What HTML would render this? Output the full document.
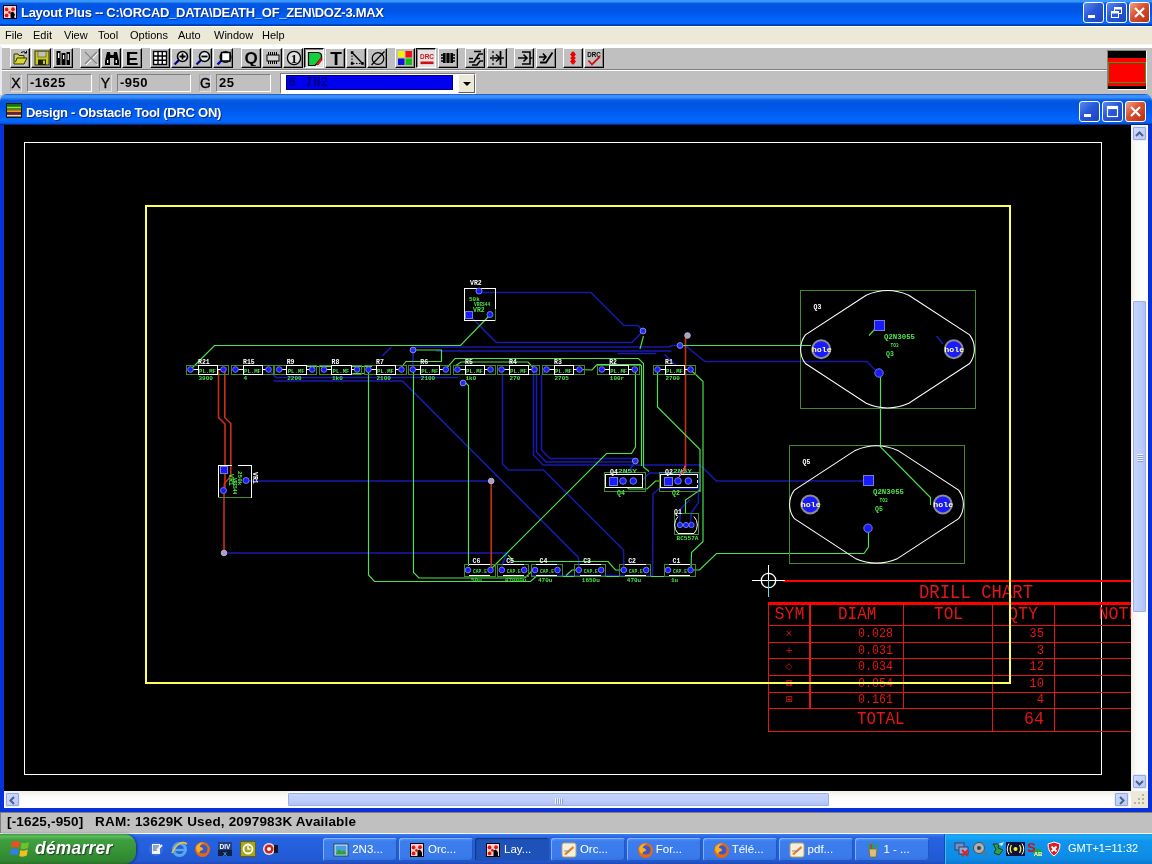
<!DOCTYPE html>
<html>
<head>
<meta charset="utf-8">
<title>Layout Plus</title>
<style>
html,body{margin:0;padding:0;}
body{will-change:transform;width:1152px;height:864px;overflow:hidden;position:relative;background:#c0c0c0;font-family:"Liberation Sans","DejaVu Sans",sans-serif;}
.abs{position:absolute;}
#title{left:0;top:0;width:1152px;height:26px;background:linear-gradient(#3a96ff 0%,#3a96ff 6%,#0a5ce0 13%,#0055e5 22%,#0055e5 45%,#0060f8 65%,#0668ff 90%,#0240b0 95%,#0240b0 100%);}
#title .t{position:absolute;left:21px;top:5px;font:bold 13px "Liberation Sans",sans-serif;color:#fff;white-space:nowrap;text-shadow:1px 1px 0 #0a2a80;letter-spacing:-0.28px;}
#menu{left:0;top:26px;width:1152px;height:19px;background:linear-gradient(#fff 0,#fff 1px,#ece9d8 1px,#ece9d8 17.5px,#fff 19px);}
#menu span{position:absolute;top:3px;font:11px "Liberation Sans",sans-serif;color:#000;}
#tb{left:0;top:45px;width:1152px;height:50px;background:#c0c0c0;border-top:3px solid #fff;box-sizing:border-box;border-left:2px solid #e8e8f0;}
#tbsep{left:2px;top:69px;width:1105px;height:1px;background:#808080;border-bottom:1px solid #fff;}
.b{position:absolute;top:48px;width:20px;height:20px;margin-left:-.5px;box-sizing:border-box;background:#c0c0c0;border:1px solid;border-color:#fff #000 #000 #fff;box-shadow:inset -1px -1px 0 #808080;}
.b svg{position:absolute;left:1.5px;top:1px;}
.b.p{background:#e4e4e4;border-color:#000 #fff #fff #000;box-shadow:inset 1px 1px 0 #808080;}
.b.p svg{left:2px;top:2px;}
.fl{position:absolute;top:74px;height:18px;box-sizing:border-box;border:1px solid;border-color:#808080 #fff #fff #808080;font:13px "Liberation Sans",sans-serif;color:#000;background:#c0c0c0;white-space:nowrap;overflow:hidden;}
.fl.l{font-size:14px;line-height:16px;text-align:center;-webkit-text-stroke:.35px #000;}
.fl.v{font-weight:bold;line-height:16px;padding-left:2px;letter-spacing:.5px;}
#combo{left:280px;top:72.5px;width:196px;height:21px;box-sizing:border-box;background:#fff;border:1px solid;border-color:#808080 #fff #fff #808080;}
#combo .sel{position:absolute;left:5px;top:1.5px;width:167px;height:15px;box-sizing:border-box;border:1px solid #000070;background:#0000f0;color:#000078;font:bold 12.3px "Liberation Mono",monospace;line-height:14px;white-space:pre;word-spacing:2.5px;padding-left:1.5px;overflow:hidden;}
#combo .dd{position:absolute;right:0px;top:0px;width:17px;height:19px;background:#ece9d8;border:1px solid;border-color:#fff #606060 #606060 #fff;box-sizing:border-box;}
#combo .dd:after{content:"";position:absolute;left:3.5px;top:7px;border:4px solid transparent;border-top:4px solid #000;}
#lay{left:1107px;top:50px;width:40px;height:40px;box-sizing:border-box;border:1px solid;border-color:#808080 #fff #fff #808080;background:#000;}
#lay i{position:absolute;left:0;top:7px;width:38px;height:28px;background:#f00;}
#lay b{position:absolute;left:0;top:11px;width:36px;height:19px;border:1px solid #30a020;background:#f00;}
.wb{position:absolute;width:21px;height:21px;box-sizing:border-box;border:1px solid #fff;border-radius:3px;background:linear-gradient(135deg,#5a8af0 0%,#2858d8 45%,#1c44c0 100%);}
.wb.x{background:linear-gradient(135deg,#f0a080 0%,#d85030 45%,#b83010 100%);}
.wb svg{position:absolute;left:0;top:0;}
#vs{left:1131px;top:125px;width:17px;height:666px;background:linear-gradient(90deg,#f0efe8,#fdfdfb 40%,#fff);}
#hs{left:4px;top:791px;width:1127px;height:17px;background:linear-gradient(#f0efe8,#fdfdfb 40%,#fff);}
#corner{left:1131px;top:791px;width:17px;height:17px;background:#ece9d8;}
.sb{position:absolute;width:15px;height:15px;box-sizing:border-box;background:linear-gradient(135deg,#d0dcfc,#b8c8f8);border:1px solid #e8eeff;border-radius:2px;box-shadow:0 0 0 1px #98a8e0 inset;}
.th{position:absolute;box-sizing:border-box;background:linear-gradient(90deg,#c8d6fb,#bccbf9 60%,#aebff5);border:1px solid #fff;border-radius:2px;box-shadow:0 0 0 1px #98b0ee inset;}
.thh{background:linear-gradient(#c8d6fb,#bccbf9 60%,#aebff5);}
#ctitle{left:0;top:94px;width:1152px;height:31px;background:linear-gradient(#1a4fa8 0%,#3a90ff 5%,#3a90ff 11%,#0a5ce0 20%,#0055e0 30%,#0058e8 50%,#0062f8 70%,#0668ff 88%,#0550d0 96%,#001060 100%);border-radius:7px 7px 0 0;}
#ctitle .t{position:absolute;left:26px;top:11px;font:bold 13px "Liberation Sans",sans-serif;color:#fff;white-space:nowrap;text-shadow:1px 1px 0 #0a2a80;letter-spacing:-0.27px;}
#cframe{left:0;top:125px;width:1152px;height:687px;background:#0831d9;}
#canvas{will-change:transform;left:4px;top:125px;width:1127px;height:666px;background:#000;overflow:hidden;}
#status{left:0;top:812px;width:1152px;height:22px;background:#c0c0c0;box-shadow:inset 0 -1px 0 #f4f4f4,inset 1px 1px 0 #808080;}
#status .t{position:absolute;left:7px;top:2px;font:bold 13.5px "Liberation Sans",sans-serif;color:#000;white-space:nowrap;letter-spacing:.17px;}
#task{left:0;top:834px;width:1152px;height:30px;background:linear-gradient(#3a80f0 0%,#2663e0 12%,#245edc 50%,#2258d2 90%,#1d4ab8 100%);}

#start{position:absolute;left:0;top:0;width:136px;height:30px;background:linear-gradient(#3c9a3c 0%,#5cbc5c 8%,#3f9f3f 20%,#379337 55%,#2f862f 90%,#2a6e2a 100%);border-radius:0 12px 12px 0;box-shadow:1px 0 3px rgba(0,0,40,.5);}
#start span{position:absolute;left:35px;top:4px;font:italic bold 17.5px "Liberation Sans",sans-serif;color:#fff;text-shadow:1px 1px 1px #204020;letter-spacing:.2px;}
.tk{position:absolute;top:4px;height:23px;width:74px;box-sizing:border-box;border-radius:3px;background:linear-gradient(#5a94f4 0%,#3c7eee 15%,#3a7aea 80%,#3270de 100%);box-shadow:inset 1px 1px 0 #7fb0ff,inset -1px -1px 0 #2456c0;color:#fff;font:11.5px "Liberation Sans",sans-serif;line-height:23px;white-space:nowrap;overflow:hidden;}
.tk.a{background:#1e52b8;box-shadow:inset 1px 1px 1px #12357c;}
.tk span{position:absolute;left:29px;top:0;}
.tk svg{position:absolute;left:10px;top:3.5px;}
#tray{position:absolute;left:944px;top:0;width:207px;height:30px;background:linear-gradient(#1a9ef0 0%,#18a8f8 10%,#1094ec 25%,#0e8ce6 80%,#0a78d0 100%);border-left:1px solid #0a50b0;box-shadow:inset 1px 0 0 #40b8ff;}
#tray span{position:absolute;left:123px;top:8px;font:11px "Liberation Sans",sans-serif;color:#fff;white-space:nowrap;}
.ql{position:absolute;top:7px;}
</style>
</head>
<body>
<div id="title" class="abs"><span class="t">Layout Plus -- C:\ORCAD_DATA\DEATH_OF_ZEN\DOZ-3.MAX</span></div>
<svg class="abs" style="left:3px;top:5px" width="14" height="14" viewBox="0 0 14 14"><rect width="14" height="14" fill="#000"/><rect x="1" y="1" width="12" height="12" fill="#f2d4d0"/><circle cx="3.6" cy="4.4" r="1.9" fill="#f01010"/><circle cx="10" cy="4.2" r="1.9" fill="#f01010"/><circle cx="3.6" cy="10.4" r="1.9" fill="#f01010"/><circle cx="6.4" cy="7.4" r="1.3" fill="#f01010"/><circle cx="6.3" cy="3.6" r="1" fill="#b0e0a0"/><path d="M7.5,7.5 L10,6.5 L12,9.5 L12,13 L7.5,13 Z" fill="#000"/><rect x="11.3" y="10.6" width="1" height="2" fill="#fff"/><rect x="5.5" y="11.6" width="2" height="1" fill="#fff"/></svg>
<div class="wb" style="left:1083px;top:2px"><svg width="19" height="19"><rect x="4" y="12" width="7" height="3" fill="#fff"/></svg></div>
<div class="wb" style="left:1106px;top:2px"><svg width="19" height="19"><rect x="7.5" y="4.5" width="7" height="6" fill="none" stroke="#fff" stroke-width="1"/><rect x="7.5" y="4.5" width="7" height="2" fill="#fff"/><rect x="4.5" y="8.5" width="7" height="6" fill="#2858d8" stroke="#fff" stroke-width="1"/><rect x="4.5" y="8.5" width="7" height="2" fill="#fff"/></svg></div>
<div class="wb x" style="left:1129px;top:2px"><svg width="19" height="19"><path d="M5,5 L14,14 M14,5 L5,14" stroke="#fff" stroke-width="2.2"/></svg></div>
<div id="menu" class="abs">
<span style="left:5px">File</span><span style="left:33px">Edit</span><span style="left:64px">View</span><span style="left:98px">Tool</span><span style="left:130px">Options</span><span style="left:178px">Auto</span><span style="left:214px">Window</span><span style="left:262px">Help</span>
</div>
<div id="tb" class="abs"></div>
<div id="tbsep" class="abs"></div>
<div class="b" style="left:10.5px"><svg width="16" height="16" viewBox="0 0 16 16"><path d="M1,6 L1,14 L11,14 L14,8 L4,8 L2.5,12 M1,6 L1,4 L5,4 L6,5.5 L11,5.5 L11,8" fill="#d8d830" stroke="#303000" stroke-width="1"/><path d="M8,2.5 Q11,0.5 13.5,3 M13.5,3 L13.5,0.8 M13.5,3 L11.3,3" fill="none" stroke="#000" stroke-width="1"/></svg></div>
<div class="b" style="left:31.8px"><svg width="16" height="16" viewBox="0 0 16 16"><rect x="1" y="1" width="14" height="14" fill="#c8c820" stroke="#303000"/><rect x="4" y="1.5" width="8" height="5.5" fill="#c0c0c0" stroke="#505000" stroke-width=".6"/><rect x="4" y="9.5" width="8" height="5.5" fill="#202000"/><rect x="9" y="10.5" width="2" height="3.5" fill="#c8c820"/></svg></div>
<div class="b" style="left:53.0px"><svg width="16" height="16" viewBox="0 0 16 16"><rect x="1.5" y="1" width="4" height="14" fill="#000"/><rect x="6.5" y="3" width="4" height="12" fill="#000"/><rect x="11.5" y="2" width="3.5" height="13" fill="#000"/><rect x="3" y="3" width="1.4" height="5" fill="#fff"/><rect x="8" y="5" width="1.2" height="4" fill="#fff"/><rect x="12.6" y="4" width="1.2" height="6" fill="#fff"/></svg></div>
<div class="b" style="left:80.5px"><svg width="16" height="16" viewBox="0 0 16 16"><path d="M2,2 L14,14 M14,2 L2,14" stroke="#fff" stroke-width="1.6" transform="translate(.8,.8)"/><path d="M2,2 L14,14 M14,2 L2,14" stroke="#868686" stroke-width="1.6"/></svg></div>
<div class="b" style="left:101.5px"><svg width="16" height="16" viewBox="0 0 16 16"><path d="M3,2 L6,2 L6.5,5 L9.5,5 L10,2 L13,2 L15,11 L15,15 L10,15 L10,8 L6,8 L6,15 L1,15 L1,11 Z" fill="#000"/><rect x="3" y="10" width="1.3" height="3" fill="#fff"/><rect x="11.6" y="10" width="1.3" height="3" fill="#fff"/></svg></div>
<div class="b" style="left:122.3px"><svg width="16" height="16" viewBox="0 0 16 16"><text x="8" y="15" text-anchor="middle" font-family="Liberation Sans, sans-serif" font-weight="bold" font-size="19" fill="#000">E</text></svg></div>
<div class="b" style="left:150.0px"><svg width="16" height="16" viewBox="0 0 16 16"><rect x="1.5" y="1.5" width="13" height="13" fill="#fff" stroke="#000" stroke-width="1.4"/><path d="M1.5,6 H14.5 M1.5,10.3 H14.5 M6,1.5 V14.5 M10.3,1.5 V14.5" stroke="#000" stroke-width="1.4"/></svg></div>
<div class="b" style="left:171.3px"><svg width="16" height="16" viewBox="0 0 16 16"><circle cx="9.5" cy="6.5" r="5" fill="#e8e8e8" stroke="#000" stroke-width="1.6"/><path d="M5.5,10.5 L1.5,14.5" stroke="#00c" stroke-width="2.4"/><path d="M6,10 L2,14" stroke="#000" stroke-width="1"/><path d="M6.5,6.5 H12.5 M9.5,3.5 V9.5" stroke="#000" stroke-width="1.8"/></svg></div>
<div class="b" style="left:192.5px"><svg width="16" height="16" viewBox="0 0 16 16"><circle cx="9.5" cy="6.5" r="5" fill="#e8e8e8" stroke="#000" stroke-width="1.6"/><path d="M5.5,10.5 L1.5,14.5" stroke="#00c" stroke-width="2.4"/><path d="M6,10 L2,14" stroke="#000" stroke-width="1"/><path d="M6.5,6.5 H12.5" stroke="#000" stroke-width="1.8"/></svg></div>
<div class="b" style="left:213.5px"><svg width="16" height="16" viewBox="0 0 16 16"><path d="M5.5,10.5 L1.5,14.5" stroke="#00c" stroke-width="2.4"/><circle cx="9.5" cy="7" r="5.4" fill="none" stroke="#000" stroke-width="1.4"/><rect x="5.5" y="2.5" width="8.5" height="8.5" fill="#fff" stroke="#000" stroke-width="1.5"/></svg></div>
<div class="b" style="left:241.0px"><svg width="16" height="16" viewBox="0 0 16 16"><text x="8" y="13.5" text-anchor="middle" font-family="Liberation Sans, sans-serif" font-weight="bold" font-size="17" fill="#000">Q</text></svg></div>
<div class="b" style="left:262.5px"><svg width="16" height="16" viewBox="0 0 16 16"><rect x="2" y="5" width="12" height="6" fill="#d8d8d8" stroke="#000"/><path d="M3.5,5 V2 M5.5,5 V2 M7.5,5 V2 M9.5,5 V2 M11.5,5 V2 M3.5,11 V14 M5.5,11 V14 M7.5,11 V14 M9.5,11 V14 M11.5,11 V14" stroke="#000" stroke-width="1"/></svg></div>
<div class="b" style="left:283.5px"><svg width="16" height="16" viewBox="0 0 16 16"><circle cx="8" cy="8" r="6.6" fill="#e0e0e0" stroke="#000" stroke-width="1.3"/><text x="8" y="12.5" text-anchor="middle" font-family="Liberation Serif, serif" font-weight="bold" font-size="13" fill="#000">1</text></svg></div>
<div class="b p" style="left:304.5px"><svg width="16" height="16" viewBox="0 0 16 16"><path d="M1.5,1.5 L11,1.5 Q14.5,2 14.5,5 L14.5,8 L8,14.5 L1.5,14.5 Z" fill="#10d040" stroke="#000" stroke-width="1.2"/><path d="M9,13 L14.5,6 L15,9 L11,14 Z" fill="#e02010" stroke="#600" stroke-width=".6"/></svg></div>
<div class="b" style="left:325.8px"><svg width="16" height="16" viewBox="0 0 16 16"><text x="8" y="15" text-anchor="middle" font-family="Liberation Sans, sans-serif" font-weight="bold" font-size="19" fill="#000">T</text></svg></div>
<div class="b" style="left:346.8px"><svg width="16" height="16" viewBox="0 0 16 16"><path d="M3,2.5 L13.5,13.5" stroke="#000" stroke-width="1.4"/><path d="M3,2.5 V13.5 H13.5" stroke="#000" stroke-width="1" stroke-dasharray="1.5,1.5" fill="none"/><rect x="1.8" y="1.2" width="2.6" height="2.6" fill="#000"/><rect x="1.8" y="12.2" width="2.6" height="2.6" fill="#000"/><rect x="12.2" y="12.2" width="2.6" height="2.6" fill="#000"/></svg></div>
<div class="b" style="left:367.6px"><svg width="16" height="16" viewBox="0 0 16 16"><circle cx="8" cy="8.5" r="5.8" fill="none" stroke="#000" stroke-width="1.2"/><path d="M1.5,15 L14.5,1.5" stroke="#000" stroke-width="1.2"/></svg></div>
<div class="b" style="left:395.3px"><svg width="16" height="16" viewBox="0 0 16 16"><rect x="1" y="1" width="6.5" height="6.5" fill="#f0f000"/><rect x="8.5" y="1" width="6.5" height="6.5" fill="#f01010"/><rect x="1" y="8.5" width="6.5" height="6.5" fill="#1010e0"/><rect x="8.5" y="8.5" width="6.5" height="6.5" fill="#10c010"/></svg></div>
<div class="b p" style="left:416.6px"><svg width="16" height="16" viewBox="0 0 16 16"><text x="8" y="8" text-anchor="middle" font-family="Liberation Sans, sans-serif" font-weight="bold" font-size="8" fill="#d01010" textLength="14" lengthAdjust="spacingAndGlyphs">DRC</text><rect x="1.5" y="10.5" width="13" height="2.6" fill="#d01010"/></svg></div>
<div class="b" style="left:438.0px"><svg width="16" height="16" viewBox="0 0 16 16"><rect x="3" y="3" width="10" height="10" fill="#000"/><path d="M1,5 H15 M1,8 H15 M1,11 H15" stroke="#000" stroke-width="1.6"/><path d="M6,3 V13 M10,3 V13" stroke="#c0c0c0" stroke-width=".8"/></svg></div>
<div class="b" style="left:465.8px"><svg width="16" height="16" viewBox="0 0 16 16"><path d="M1,12 H6 L11,4 H15 M1,8.5 H5 M8,8.5 H12 M4,15 H9 L12,11 H15 M6,1.5 H13" stroke="#000" stroke-width="1.6" fill="none"/></svg></div>
<div class="b" style="left:487.0px"><svg width="16" height="16" viewBox="0 0 16 16"><path d="M11.5,1 V15" stroke="#000" stroke-width="1.8"/><path d="M1,8 H11 M7,4.5 L11,8 L7,11.5" stroke="#000" stroke-width="1.6" fill="none"/><path d="M4,1 V15" stroke="#000" stroke-width="1.2" stroke-dasharray="2,2"/><path d="M12,8 H15" stroke="#000" stroke-width="1.4"/></svg></div>
<div class="b" style="left:514.7px"><svg width="16" height="16" viewBox="0 0 16 16"><path d="M1,8 H10 M6.5,4.5 L10,8 L6.5,11.5" stroke="#000" stroke-width="1.6" fill="none"/><path d="M5,2 H13 V14 H5" stroke="#000" stroke-width="1.6" fill="none"/><path d="M13,8 H15.5" stroke="#000" stroke-width="1.4"/></svg></div>
<div class="b" style="left:536.0px"><svg width="16" height="16" viewBox="0 0 16 16"><path d="M1,7 H8 M5,3.5 L8,7 L5,10.5" stroke="#000" stroke-width="1.6" fill="none"/><path d="M2,12.5 H8 L14.5,2.5" stroke="#000" stroke-width="1.8" fill="none"/></svg></div>
<div class="b" style="left:563.0px"><svg width="16" height="16" viewBox="0 0 16 16"><path d="M8,1 L11,5 L9,5 L9,6.5 L11,8 L9,9.5 L9,11 L11,11 L8,15 L5,11 L7,11 L7,9.5 L5,8 L7,6.5 L7,5 L5,5 Z" fill="#f00000"/><circle cx="8" cy="4.6" r="2.4" fill="#f00000"/><circle cx="8" cy="11.4" r="2.4" fill="#f00000"/></svg></div>
<div class="b" style="left:584.2px"><svg width="16" height="16" viewBox="0 0 16 16"><text x="8" y="6.5" text-anchor="middle" font-family="Liberation Sans, sans-serif" font-weight="bold" font-size="7" fill="#000" textLength="13.5" lengthAdjust="spacingAndGlyphs">DRC</text><path d="M2.5,10.5 L6,14.5 L14,6.5" stroke="#d01010" stroke-width="1.8" fill="none"/></svg></div>
<div class="fl l" style="left:10px;width:12px;border-color:#a8a8a8 #e0e0e0 #e0e0e0 #a8a8a8">X</div><div class="fl v" style="left:27px;width:65px">-1625</div>
<div class="fl l" style="left:99px;width:13px;border-color:#a8a8a8 #e0e0e0 #e0e0e0 #a8a8a8">Y</div><div class="fl v" style="left:117px;width:74px">-950</div>
<div class="fl l" style="left:199px;width:12px;border-color:#a8a8a8 #e0e0e0 #e0e0e0 #a8a8a8">G</div><div class="fl v" style="left:216px;width:55px">25</div>
<div id="combo" class="abs"><div class="sel">6 IN2</div><div class="dd"></div></div>
<div id="lay" class="abs"><i></i><b></b></div>
<div id="ctitle" class="abs"><span class="t">Design - Obstacle Tool (DRC ON)</span></div>
<svg class="abs" style="left:6px;top:103px" width="16" height="15" viewBox="0 0 16 15"><rect width="16" height="15" fill="#101820"/><rect x="1" y="1" width="14" height="3" fill="#20c020"/><rect x="1" y="4" width="14" height="3" fill="#a0e020"/><rect x="1" y="7" width="14" height="2.5" fill="#f0a020"/><rect x="1" y="9.5" width="14" height="2.5" fill="#c02060"/><rect x="1" y="12" width="14" height="2" fill="#e0e0a0"/><path d="M2,1 V14 M4,1 V14 M6,1 V14 M8,1 V14 M10,1 V14 M12,1 V14 M14,1 V14" stroke="#102010" stroke-width="1" stroke-dasharray="2.5,1.5"/></svg>
<div class="wb" style="left:1079px;top:101px"><svg width="19" height="19"><rect x="4" y="12" width="7" height="3" fill="#fff"/></svg></div>
<div class="wb" style="left:1102px;top:101px"><svg width="19" height="19"><rect x="4.5" y="4.5" width="10" height="10" fill="none" stroke="#fff" stroke-width="1.2"/><rect x="4.5" y="4.5" width="10" height="2.6" fill="#fff"/></svg></div>
<div class="wb x" style="left:1125px;top:101px"><svg width="19" height="19"><path d="M5,5 L14,14 M14,5 L5,14" stroke="#fff" stroke-width="2.2"/></svg></div>
<div id="cframe" class="abs"></div>
<div id="canvas" class="abs">
<svg id="pcb" class="abs" style="left:-4px;top:-125px" width="1152" height="864" viewBox="0 0 1152 864" shape-rendering="crispEdges">
<rect x="24.5" y="142.5" width="1077" height="632" fill="none" stroke="#fff" stroke-width="1"/>
<polyline points="479.0,291.0 481.5,292.5 591.0,292.5 624.0,325.5 638.0,325.5 643.0,331.0" fill="none" stroke="#1818a8" stroke-width="1.6" shape-rendering="auto"/>
<polyline points="468.5,314.5 496.5,342.5 632.0,342.5 643.0,331.0" fill="none" stroke="#1a1ab4" stroke-width="1.6" shape-rendering="auto"/>
<polyline points="413.0,350.0 413.0,369.5" fill="none" stroke="#1a1ab4" stroke-width="1.6" shape-rendering="auto"/>
<polyline points="413.0,350.0 416.0,347.0 669.0,347.0 672.0,345.5 680.0,345.5" fill="none" stroke="#1818a8" stroke-width="1.6" shape-rendering="auto"/>
<polyline points="391.5,347.0 382.0,356.0" fill="none" stroke="#1a1ab4" stroke-width="1.6" shape-rendering="auto"/>
<polyline points="436.0,351.0 671.5,351.0" fill="none" stroke="#1a1ab4" stroke-width="1.6" shape-rendering="auto"/>
<polyline points="617.5,353.5 656.5,353.5" fill="none" stroke="#1a1ab4" stroke-width="1.6" shape-rendering="auto"/>
<polyline points="664.5,354.5 676.0,365.0" fill="none" stroke="#1a1ab4" stroke-width="1.6" shape-rendering="auto"/>
<polyline points="680.0,345.5 687.0,347.0 705.0,361.5 867.0,361.5 873.0,368.0 879.0,373.0" fill="none" stroke="#1818a8" stroke-width="1.6" shape-rendering="auto"/>
<polyline points="268.5,369.5 276.0,377.5 458.0,377.5" fill="none" stroke="#1a1ab4" stroke-width="1.6" shape-rendering="auto"/>
<polyline points="273.5,381.0 402.5,381.0 578.5,557.5 578.8,570.0" fill="none" stroke="#1a1ab4" stroke-width="1.6" shape-rendering="auto"/>
<polyline points="246.0,481.0 491.0,481.0" fill="none" stroke="#1a1ab4" stroke-width="1.6" shape-rendering="auto"/>
<polyline points="224.0,553.0 507.0,553.0 502.0,565.0 501.8,570.0" fill="none" stroke="#1a1ab4" stroke-width="1.6" shape-rendering="auto"/>
<polyline points="501.8,369.5 502.5,375.0 502.5,464.0 508.5,470.0 543.5,470.0 623.5,550.0 623.8,570.0" fill="none" stroke="#1818a8" stroke-width="1.6" shape-rendering="auto"/>
<polyline points="533.5,372.0 533.5,455.0 543.0,465.0 700.0,465.0 716.5,481.0 868.0,481.0" fill="none" stroke="#1818a8" stroke-width="1.6" shape-rendering="auto"/>
<polyline points="536.5,372.0 536.5,452.0 546.0,462.0 632.0,462.0" fill="none" stroke="#1a1ab4" stroke-width="1.6" shape-rendering="auto"/>
<polyline points="546.2,369.5 541.5,375.0 541.5,450.0 550.0,458.5 632.5,458.5 635.0,461.0" fill="none" stroke="#1818a8" stroke-width="1.6" shape-rendering="auto"/>
<polyline points="622.8,481.0 635.3,461.0" fill="none" stroke="#1a1ab4" stroke-width="1.6" shape-rendering="auto"/>
<polyline points="641.5,481.0 649.5,473.0 698.0,473.0 698.5,502.5 691.5,512.5 690.0,525.0" fill="none" stroke="#1818a8" stroke-width="1.6" shape-rendering="auto"/>
<polyline points="531.0,575.5 652.5,575.5 653.0,494.0 659.0,488.5 698.0,488.5" fill="none" stroke="#1818a8" stroke-width="1.6" shape-rendering="auto"/>
<polyline points="690.0,499.5 680.5,509.0 679.5,525.0" fill="none" stroke="#1a1ab4" stroke-width="1.6" shape-rendering="auto"/>
<polyline points="936.5,336.0 943.0,344.0" fill="none" stroke="#1a1ab4" stroke-width="1.6" shape-rendering="auto"/>
<polyline points="218.5,369.5 218.5,417.5 225.0,424.0 225.0,486.0 224.0,491.0 224.0,553.0" fill="none" stroke="#c83018" stroke-width="1.6" shape-rendering="auto"/>
<polyline points="224.8,369.5 224.8,417.5 230.8,423.5 230.8,476.0 224.5,483.5 223.8,490.5" fill="none" stroke="#c83018" stroke-width="1.6" shape-rendering="auto"/>
<polyline points="491.2,481.0 491.2,570.0" fill="none" stroke="#c83018" stroke-width="1.6" shape-rendering="auto"/>
<polyline points="687.0,337.0 685.5,339.0 685.5,470.0 678.5,481.0" fill="none" stroke="#c83018" stroke-width="1.6" shape-rendering="auto"/>
<polyline points="190.5,369.5 214.5,345.5 460.5,345.5 490.0,315.0" fill="none" stroke="#4ce44c" stroke-width="1.15" shape-rendering="auto"/>
<polyline points="413.0,350.0 441.5,350.0 441.5,361.5 406.0,361.5 401.5,367.0" fill="none" stroke="#4ce44c" stroke-width="1.15" shape-rendering="auto"/>
<polyline points="368.5,369.5 368.5,575.0 374.5,581.5 530.5,581.5 536.0,576.5 695.0,576.5" fill="none" stroke="#4ce44c" stroke-width="1.15" shape-rendering="auto"/>
<polyline points="413.5,369.5 413.5,572.5 419.0,578.0 525.0,578.0 534.0,569.0" fill="none" stroke="#4ce44c" stroke-width="1.15" shape-rendering="auto"/>
<polyline points="463.0,383.0 466.0,383.0 468.5,385.5 468.5,566.0" fill="none" stroke="#4ce44c" stroke-width="1.15" shape-rendering="auto"/>
<polyline points="446.2,369.5 448.0,366.5 455.0,358.5 638.5,358.5 643.5,363.5 643.5,467.0 649.0,471.5" fill="none" stroke="#4ce44c" stroke-width="1.15" shape-rendering="auto"/>
<polyline points="455.0,366.0 461.0,362.0 528.0,362.0 535.0,369.5" fill="none" stroke="#4ce44c" stroke-width="1.15" shape-rendering="auto"/>
<polyline points="579.5,369.5 592.0,370.0 597.0,364.5 640.0,364.5 641.5,366.0 641.5,466.0" fill="none" stroke="#4ce44c" stroke-width="1.15" shape-rendering="auto"/>
<polyline points="635.5,369.5 635.5,447.0 631.5,453.5 606.5,453.5 493.5,566.5 490.8,570.0" fill="none" stroke="#4ce44c" stroke-width="1.15" shape-rendering="auto"/>
<polyline points="657.5,369.5 657.5,407.0 700.0,449.5 700.0,490.0 685.5,500.0 685.5,514.0" fill="none" stroke="#4ce44c" stroke-width="1.15" shape-rendering="auto"/>
<polyline points="690.5,369.5 693.0,372.0 703.0,381.5 703.0,541.5 691.5,552.5 691.0,570.0" fill="none" stroke="#4ce44c" stroke-width="1.15" shape-rendering="auto"/>
<polyline points="680.0,345.5 811.0,345.5" fill="none" stroke="#4ce44c" stroke-width="1.15" shape-rendering="auto"/>
<polyline points="880.5,373.0 880.5,447.0 930.5,497.5 930.5,505.0" fill="none" stroke="#4ce44c" stroke-width="1.15" shape-rendering="auto"/>
<polyline points="868.5,528.0 868.5,547.0 864.0,553.5 716.5,553.5 699.5,570.0 690.8,570.0" fill="none" stroke="#4ce44c" stroke-width="1.15" shape-rendering="auto"/>
<polyline points="643.5,336.0 640.0,349.0" fill="none" stroke="#4ce44c" stroke-width="1.15" shape-rendering="auto"/>
<polyline points="508.0,555.0 514.0,561.5 608.0,561.5 615.5,570.0 623.8,570.0" fill="none" stroke="#4ce44c" stroke-width="1.15" shape-rendering="auto"/>
<polyline points="623.5,484.5 629.0,489.0 647.0,489.0 655.5,481.0 668.0,481.0" fill="none" stroke="#4ce44c" stroke-width="1.15" shape-rendering="auto"/>
<polyline points="303.0,366.5 372.0,366.5" fill="none" stroke="#4ce44c" stroke-width="1.15" shape-rendering="auto"/>
<polyline points="352.5,373.5 364.0,373.5" fill="none" stroke="#4ce44c" stroke-width="1.15" shape-rendering="auto"/>
<polyline points="874.5,329.5 869.0,335.5" fill="none" stroke="#4ce44c" stroke-width="1.15" shape-rendering="auto"/>
<polyline points="566.0,575.5 572.0,570.0 578.8,570.0" fill="none" stroke="#4ce44c" stroke-width="1.15" shape-rendering="auto"/>
<rect x="186.0" y="365.5" width="42.0" height="9.0" fill="none" stroke="#3f8a2a" stroke-width="1"/>
<polyline points="190.5,369.5 223.5,369.5" fill="none" stroke="#ffffff" stroke-width="1" />
<rect x="198.0" y="365.5" width="19.5" height="9.0" fill="#000" stroke="#ffffff" stroke-width="1"/>
<text x="199.0" y="372.5" fill="#4ce44c" font-size="5" font-family="Liberation Mono, monospace" font-weight="bold" textLength="17" lengthAdjust="spacingAndGlyphs">PL.MF</text>
<circle cx="190.5" cy="369.5" r="2.8" fill="#1a1aff" stroke="#6f7fd8" stroke-width="1" shape-rendering="auto"/>
<circle cx="223.5" cy="369.5" r="2.8" fill="#1a1aff" stroke="#6f7fd8" stroke-width="1" shape-rendering="auto"/>
<text x="198.0" y="364.0" fill="#ffffff" font-size="6.5" font-family="Liberation Mono, monospace" font-weight="bold" >R21</text>
<text x="198.5" y="379.5" fill="#4ce44c" font-size="6" font-family="Liberation Mono, monospace" font-weight="bold" >3900</text>
<rect x="231.0" y="365.5" width="42.0" height="9.0" fill="none" stroke="#3f8a2a" stroke-width="1"/>
<polyline points="235.5,369.5 268.5,369.5" fill="none" stroke="#ffffff" stroke-width="1" />
<rect x="243.0" y="365.5" width="19.5" height="9.0" fill="#000" stroke="#ffffff" stroke-width="1"/>
<text x="244.0" y="372.5" fill="#4ce44c" font-size="5" font-family="Liberation Mono, monospace" font-weight="bold" textLength="17" lengthAdjust="spacingAndGlyphs">PL.MF</text>
<circle cx="235.5" cy="369.5" r="2.8" fill="#1a1aff" stroke="#6f7fd8" stroke-width="1" shape-rendering="auto"/>
<circle cx="268.5" cy="369.5" r="2.8" fill="#1a1aff" stroke="#6f7fd8" stroke-width="1" shape-rendering="auto"/>
<text x="243.0" y="364.0" fill="#ffffff" font-size="6.5" font-family="Liberation Mono, monospace" font-weight="bold" >R15</text>
<text x="243.5" y="379.5" fill="#4ce44c" font-size="6" font-family="Liberation Mono, monospace" font-weight="bold" >4</text>
<rect x="274.7" y="365.5" width="42.0" height="9.0" fill="none" stroke="#3f8a2a" stroke-width="1"/>
<polyline points="279.2,369.5 312.2,369.5" fill="none" stroke="#ffffff" stroke-width="1" />
<rect x="286.7" y="365.5" width="19.5" height="9.0" fill="#000" stroke="#ffffff" stroke-width="1"/>
<text x="287.7" y="372.5" fill="#4ce44c" font-size="5" font-family="Liberation Mono, monospace" font-weight="bold" textLength="17" lengthAdjust="spacingAndGlyphs">PL.MF</text>
<circle cx="279.2" cy="369.5" r="2.8" fill="#1a1aff" stroke="#6f7fd8" stroke-width="1" shape-rendering="auto"/>
<circle cx="312.2" cy="369.5" r="2.8" fill="#1a1aff" stroke="#6f7fd8" stroke-width="1" shape-rendering="auto"/>
<text x="286.7" y="364.0" fill="#ffffff" font-size="6.5" font-family="Liberation Mono, monospace" font-weight="bold" >R9</text>
<text x="287.2" y="379.5" fill="#4ce44c" font-size="6" font-family="Liberation Mono, monospace" font-weight="bold" >2200</text>
<rect x="319.5" y="365.5" width="42.0" height="9.0" fill="none" stroke="#3f8a2a" stroke-width="1"/>
<polyline points="324.0,369.5 357.0,369.5" fill="none" stroke="#ffffff" stroke-width="1" />
<rect x="331.5" y="365.5" width="19.5" height="9.0" fill="#000" stroke="#ffffff" stroke-width="1"/>
<text x="332.5" y="372.5" fill="#4ce44c" font-size="5" font-family="Liberation Mono, monospace" font-weight="bold" textLength="17" lengthAdjust="spacingAndGlyphs">PL.MF</text>
<circle cx="324.0" cy="369.5" r="2.8" fill="#1a1aff" stroke="#6f7fd8" stroke-width="1" shape-rendering="auto"/>
<circle cx="357.0" cy="369.5" r="2.8" fill="#1a1aff" stroke="#6f7fd8" stroke-width="1" shape-rendering="auto"/>
<text x="331.5" y="364.0" fill="#ffffff" font-size="6.5" font-family="Liberation Mono, monospace" font-weight="bold" >R8</text>
<text x="332.0" y="379.5" fill="#4ce44c" font-size="6" font-family="Liberation Mono, monospace" font-weight="bold" >1k0</text>
<rect x="364.0" y="365.5" width="42.0" height="9.0" fill="none" stroke="#3f8a2a" stroke-width="1"/>
<polyline points="368.5,369.5 401.5,369.5" fill="none" stroke="#ffffff" stroke-width="1" />
<rect x="376.0" y="365.5" width="19.5" height="9.0" fill="#000" stroke="#ffffff" stroke-width="1"/>
<text x="377.0" y="372.5" fill="#4ce44c" font-size="5" font-family="Liberation Mono, monospace" font-weight="bold" textLength="17" lengthAdjust="spacingAndGlyphs">PL.MF</text>
<circle cx="368.5" cy="369.5" r="2.8" fill="#1a1aff" stroke="#6f7fd8" stroke-width="1" shape-rendering="auto"/>
<circle cx="401.5" cy="369.5" r="2.8" fill="#1a1aff" stroke="#6f7fd8" stroke-width="1" shape-rendering="auto"/>
<text x="376.0" y="364.0" fill="#ffffff" font-size="6.5" font-family="Liberation Mono, monospace" font-weight="bold" >R7</text>
<text x="376.5" y="379.5" fill="#4ce44c" font-size="6" font-family="Liberation Mono, monospace" font-weight="bold" >2100</text>
<rect x="408.3" y="365.5" width="42.0" height="9.0" fill="none" stroke="#3f8a2a" stroke-width="1"/>
<polyline points="412.8,369.5 445.8,369.5" fill="none" stroke="#ffffff" stroke-width="1" />
<rect x="420.3" y="365.5" width="19.5" height="9.0" fill="#000" stroke="#ffffff" stroke-width="1"/>
<text x="421.3" y="372.5" fill="#4ce44c" font-size="5" font-family="Liberation Mono, monospace" font-weight="bold" textLength="17" lengthAdjust="spacingAndGlyphs">PL.MF</text>
<circle cx="412.8" cy="369.5" r="2.8" fill="#1a1aff" stroke="#6f7fd8" stroke-width="1" shape-rendering="auto"/>
<circle cx="445.8" cy="369.5" r="2.8" fill="#1a1aff" stroke="#6f7fd8" stroke-width="1" shape-rendering="auto"/>
<text x="420.3" y="364.0" fill="#ffffff" font-size="6.5" font-family="Liberation Mono, monospace" font-weight="bold" >R6</text>
<text x="420.8" y="379.5" fill="#4ce44c" font-size="6" font-family="Liberation Mono, monospace" font-weight="bold" >2100</text>
<rect x="453.0" y="365.5" width="42.0" height="9.0" fill="none" stroke="#3f8a2a" stroke-width="1"/>
<polyline points="457.5,369.5 490.5,369.5" fill="none" stroke="#ffffff" stroke-width="1" />
<rect x="465.0" y="365.5" width="19.5" height="9.0" fill="#000" stroke="#ffffff" stroke-width="1"/>
<text x="466.0" y="372.5" fill="#4ce44c" font-size="5" font-family="Liberation Mono, monospace" font-weight="bold" textLength="17" lengthAdjust="spacingAndGlyphs">PL.MF</text>
<circle cx="457.5" cy="369.5" r="2.8" fill="#1a1aff" stroke="#6f7fd8" stroke-width="1" shape-rendering="auto"/>
<circle cx="490.5" cy="369.5" r="2.8" fill="#1a1aff" stroke="#6f7fd8" stroke-width="1" shape-rendering="auto"/>
<text x="465.0" y="364.0" fill="#ffffff" font-size="6.5" font-family="Liberation Mono, monospace" font-weight="bold" >R5</text>
<text x="465.5" y="379.5" fill="#4ce44c" font-size="6" font-family="Liberation Mono, monospace" font-weight="bold" >1k0</text>
<rect x="497.0" y="365.5" width="42.0" height="9.0" fill="none" stroke="#3f8a2a" stroke-width="1"/>
<polyline points="501.5,369.5 534.5,369.5" fill="none" stroke="#ffffff" stroke-width="1" />
<rect x="509.0" y="365.5" width="19.5" height="9.0" fill="#000" stroke="#ffffff" stroke-width="1"/>
<text x="510.0" y="372.5" fill="#4ce44c" font-size="5" font-family="Liberation Mono, monospace" font-weight="bold" textLength="17" lengthAdjust="spacingAndGlyphs">PL.MF</text>
<circle cx="501.5" cy="369.5" r="2.8" fill="#1a1aff" stroke="#6f7fd8" stroke-width="1" shape-rendering="auto"/>
<circle cx="534.5" cy="369.5" r="2.8" fill="#1a1aff" stroke="#6f7fd8" stroke-width="1" shape-rendering="auto"/>
<text x="509.0" y="364.0" fill="#ffffff" font-size="6.5" font-family="Liberation Mono, monospace" font-weight="bold" >R4</text>
<text x="509.5" y="379.5" fill="#4ce44c" font-size="6" font-family="Liberation Mono, monospace" font-weight="bold" >270</text>
<rect x="542.0" y="365.5" width="42.0" height="9.0" fill="none" stroke="#3f8a2a" stroke-width="1"/>
<polyline points="546.5,369.5 579.5,369.5" fill="none" stroke="#ffffff" stroke-width="1" />
<rect x="554.0" y="365.5" width="19.5" height="9.0" fill="#000" stroke="#ffffff" stroke-width="1"/>
<text x="555.0" y="372.5" fill="#4ce44c" font-size="5" font-family="Liberation Mono, monospace" font-weight="bold" textLength="17" lengthAdjust="spacingAndGlyphs">PL.MF</text>
<circle cx="546.5" cy="369.5" r="2.8" fill="#1a1aff" stroke="#6f7fd8" stroke-width="1" shape-rendering="auto"/>
<circle cx="579.5" cy="369.5" r="2.8" fill="#1a1aff" stroke="#6f7fd8" stroke-width="1" shape-rendering="auto"/>
<text x="554.0" y="364.0" fill="#ffffff" font-size="6.5" font-family="Liberation Mono, monospace" font-weight="bold" >R3</text>
<text x="554.5" y="379.5" fill="#4ce44c" font-size="6" font-family="Liberation Mono, monospace" font-weight="bold" >2705</text>
<rect x="597.2" y="365.5" width="42.0" height="9.0" fill="none" stroke="#3f8a2a" stroke-width="1"/>
<polyline points="601.8,369.5 634.8,369.5" fill="none" stroke="#ffffff" stroke-width="1" />
<rect x="609.2" y="365.5" width="19.5" height="9.0" fill="#000" stroke="#ffffff" stroke-width="1"/>
<text x="610.2" y="372.5" fill="#4ce44c" font-size="5" font-family="Liberation Mono, monospace" font-weight="bold" textLength="17" lengthAdjust="spacingAndGlyphs">PL.MF</text>
<circle cx="601.8" cy="369.5" r="2.8" fill="#1a1aff" stroke="#6f7fd8" stroke-width="1" shape-rendering="auto"/>
<circle cx="634.8" cy="369.5" r="2.8" fill="#1a1aff" stroke="#6f7fd8" stroke-width="1" shape-rendering="auto"/>
<text x="609.2" y="364.0" fill="#ffffff" font-size="6.5" font-family="Liberation Mono, monospace" font-weight="bold" >R2</text>
<text x="609.8" y="379.5" fill="#4ce44c" font-size="6" font-family="Liberation Mono, monospace" font-weight="bold" >100r</text>
<rect x="653.0" y="365.5" width="42.0" height="9.0" fill="none" stroke="#3f8a2a" stroke-width="1"/>
<polyline points="657.5,369.5 690.5,369.5" fill="none" stroke="#ffffff" stroke-width="1" />
<rect x="665.0" y="365.5" width="19.5" height="9.0" fill="#000" stroke="#ffffff" stroke-width="1"/>
<text x="666.0" y="372.5" fill="#4ce44c" font-size="5" font-family="Liberation Mono, monospace" font-weight="bold" textLength="17" lengthAdjust="spacingAndGlyphs">PL.MF</text>
<circle cx="657.5" cy="369.5" r="2.8" fill="#1a1aff" stroke="#6f7fd8" stroke-width="1" shape-rendering="auto"/>
<circle cx="690.5" cy="369.5" r="2.8" fill="#1a1aff" stroke="#6f7fd8" stroke-width="1" shape-rendering="auto"/>
<text x="665.0" y="364.0" fill="#ffffff" font-size="6.5" font-family="Liberation Mono, monospace" font-weight="bold" >R1</text>
<text x="665.5" y="379.5" fill="#4ce44c" font-size="6" font-family="Liberation Mono, monospace" font-weight="bold" >2700</text>
<rect x="464.0" y="564.5" width="31.0" height="12.0" fill="none" stroke="#3f8a2a" stroke-width="1"/>
<polyline points="469.0,564.5 490.0,564.5" fill="none" stroke="#ffffff" stroke-width="1" />
<polyline points="469.0,575.5 490.0,575.5" fill="none" stroke="#ffffff" stroke-width="1" />
<text x="473.0" y="572.5" fill="#4ce44c" font-size="5" font-family="Liberation Mono, monospace" font-weight="bold" textLength="14" lengthAdjust="spacingAndGlyphs">CAP.E</text>
<circle cx="468.0" cy="570.0" r="2.8" fill="#1a1aff" stroke="#6f7fd8" stroke-width="1" shape-rendering="auto"/>
<circle cx="490.5" cy="570.0" r="2.8" fill="#1a1aff" stroke="#6f7fd8" stroke-width="1" shape-rendering="auto"/>
<text x="472.5" y="562.5" fill="#ffffff" font-size="6.5" font-family="Liberation Mono, monospace" font-weight="bold" >C6</text>
<text x="471.0" y="582.0" fill="#4ce44c" font-size="6" font-family="Liberation Mono, monospace" font-weight="bold" >50u</text>
<rect x="497.8" y="564.5" width="31.0" height="12.0" fill="none" stroke="#3f8a2a" stroke-width="1"/>
<polyline points="502.8,564.5 523.8,564.5" fill="none" stroke="#ffffff" stroke-width="1" />
<polyline points="502.8,575.5 523.8,575.5" fill="none" stroke="#ffffff" stroke-width="1" />
<text x="506.8" y="572.5" fill="#4ce44c" font-size="5" font-family="Liberation Mono, monospace" font-weight="bold" textLength="14" lengthAdjust="spacingAndGlyphs">CAP.E</text>
<circle cx="501.8" cy="570.0" r="2.8" fill="#1a1aff" stroke="#6f7fd8" stroke-width="1" shape-rendering="auto"/>
<circle cx="524.2" cy="570.0" r="2.8" fill="#1a1aff" stroke="#6f7fd8" stroke-width="1" shape-rendering="auto"/>
<text x="506.2" y="562.5" fill="#ffffff" font-size="6.5" font-family="Liberation Mono, monospace" font-weight="bold" >C5</text>
<text x="504.8" y="582.0" fill="#4ce44c" font-size="6" font-family="Liberation Mono, monospace" font-weight="bold" >47000u</text>
<rect x="531.0" y="564.5" width="31.0" height="12.0" fill="none" stroke="#3f8a2a" stroke-width="1"/>
<polyline points="536.0,564.5 557.0,564.5" fill="none" stroke="#ffffff" stroke-width="1" />
<polyline points="536.0,575.5 557.0,575.5" fill="none" stroke="#ffffff" stroke-width="1" />
<text x="540.0" y="572.5" fill="#4ce44c" font-size="5" font-family="Liberation Mono, monospace" font-weight="bold" textLength="14" lengthAdjust="spacingAndGlyphs">CAP.E</text>
<circle cx="535.0" cy="570.0" r="2.8" fill="#1a1aff" stroke="#6f7fd8" stroke-width="1" shape-rendering="auto"/>
<circle cx="557.5" cy="570.0" r="2.8" fill="#1a1aff" stroke="#6f7fd8" stroke-width="1" shape-rendering="auto"/>
<text x="539.5" y="562.5" fill="#ffffff" font-size="6.5" font-family="Liberation Mono, monospace" font-weight="bold" >C4</text>
<text x="538.0" y="582.0" fill="#4ce44c" font-size="6" font-family="Liberation Mono, monospace" font-weight="bold" >470u</text>
<rect x="574.8" y="564.5" width="31.0" height="12.0" fill="none" stroke="#3f8a2a" stroke-width="1"/>
<polyline points="579.8,564.5 600.8,564.5" fill="none" stroke="#ffffff" stroke-width="1" />
<polyline points="579.8,575.5 600.8,575.5" fill="none" stroke="#ffffff" stroke-width="1" />
<text x="583.8" y="572.5" fill="#4ce44c" font-size="5" font-family="Liberation Mono, monospace" font-weight="bold" textLength="14" lengthAdjust="spacingAndGlyphs">CAP.E</text>
<circle cx="578.8" cy="570.0" r="2.8" fill="#1a1aff" stroke="#6f7fd8" stroke-width="1" shape-rendering="auto"/>
<circle cx="601.2" cy="570.0" r="2.8" fill="#1a1aff" stroke="#6f7fd8" stroke-width="1" shape-rendering="auto"/>
<text x="583.2" y="562.5" fill="#ffffff" font-size="6.5" font-family="Liberation Mono, monospace" font-weight="bold" >C3</text>
<text x="581.8" y="582.0" fill="#4ce44c" font-size="6" font-family="Liberation Mono, monospace" font-weight="bold" >1650u</text>
<rect x="619.8" y="564.5" width="31.0" height="12.0" fill="none" stroke="#3f8a2a" stroke-width="1"/>
<polyline points="624.8,564.5 645.8,564.5" fill="none" stroke="#ffffff" stroke-width="1" />
<polyline points="624.8,575.5 645.8,575.5" fill="none" stroke="#ffffff" stroke-width="1" />
<text x="628.8" y="572.5" fill="#4ce44c" font-size="5" font-family="Liberation Mono, monospace" font-weight="bold" textLength="14" lengthAdjust="spacingAndGlyphs">CAP.E</text>
<circle cx="623.8" cy="570.0" r="2.8" fill="#1a1aff" stroke="#6f7fd8" stroke-width="1" shape-rendering="auto"/>
<circle cx="646.2" cy="570.0" r="2.8" fill="#1a1aff" stroke="#6f7fd8" stroke-width="1" shape-rendering="auto"/>
<text x="628.2" y="562.5" fill="#ffffff" font-size="6.5" font-family="Liberation Mono, monospace" font-weight="bold" >C2</text>
<text x="626.8" y="582.0" fill="#4ce44c" font-size="6" font-family="Liberation Mono, monospace" font-weight="bold" >470u</text>
<rect x="664.0" y="564.5" width="31.0" height="12.0" fill="none" stroke="#3f8a2a" stroke-width="1"/>
<polyline points="669.0,564.5 690.0,564.5" fill="none" stroke="#ffffff" stroke-width="1" />
<polyline points="669.0,575.5 690.0,575.5" fill="none" stroke="#ffffff" stroke-width="1" />
<text x="673.0" y="572.5" fill="#4ce44c" font-size="5" font-family="Liberation Mono, monospace" font-weight="bold" textLength="14" lengthAdjust="spacingAndGlyphs">CAP.E</text>
<circle cx="668.0" cy="570.0" r="2.8" fill="#1a1aff" stroke="#6f7fd8" stroke-width="1" shape-rendering="auto"/>
<circle cx="690.5" cy="570.0" r="2.8" fill="#1a1aff" stroke="#6f7fd8" stroke-width="1" shape-rendering="auto"/>
<text x="672.5" y="562.5" fill="#ffffff" font-size="6.5" font-family="Liberation Mono, monospace" font-weight="bold" >C1</text>
<text x="671.0" y="582.0" fill="#4ce44c" font-size="6" font-family="Liberation Mono, monospace" font-weight="bold" >1u</text>
<rect x="464.5" y="288.0" width="31.0" height="32.5" fill="none" stroke="#ffffff" stroke-width="1"/>
<polyline points="495.5,309.0 495.5,320.5" fill="none" stroke="#3f8a2a" stroke-width="1" />
<text x="470.0" y="285.0" fill="#ffffff" font-size="6.5" font-family="Liberation Mono, monospace" font-weight="bold" >VR2</text>
<text x="469.0" y="301.0" fill="#4ce44c" font-size="6" font-family="Liberation Mono, monospace" font-weight="bold" >50k</text>
<text x="474.0" y="306.0" fill="#4ce44c" font-size="4.5" font-family="Liberation Mono, monospace" font-weight="bold" >VRES44</text>
<text x="473.0" y="311.5" fill="#4ce44c" font-size="6.5" font-family="Liberation Mono, monospace" font-weight="bold" >VR2</text>
<circle cx="479.0" cy="291.0" r="3.0" fill="#1a1aff" stroke="#6f7fd8" stroke-width="1" shape-rendering="auto"/>
<rect x="465.0" y="311.0" width="7.0" height="7.0" fill="#1a1aff" stroke="#6f7fd8" stroke-width="1"/>
<circle cx="490.0" cy="314.5" r="3.0" fill="#1a1aff" stroke="#6f7fd8" stroke-width="1" shape-rendering="auto"/>
<rect x="218.0" y="465.5" width="33.0" height="31.5" fill="none" stroke="#ffffff" stroke-width="1"/>
<polyline points="232.0,465.5 238.0,465.5" fill="none" stroke="#000" stroke-width="2" />
<polyline points="218.0,497.0 251.0,497.0" fill="none" stroke="#3f8a2a" stroke-width="1" />
<text x="0.0" y="0.0" fill="#4ce44c" font-size="6" font-family="Liberation Mono, monospace" font-weight="bold" transform="translate(238,471) rotate(90)">250k</text>
<text x="0.0" y="0.0" fill="#4ce44c" font-size="4.5" font-family="Liberation Mono, monospace" font-weight="bold" transform="translate(233,478) rotate(90)">VRES44</text>
<text x="0.0" y="0.0" fill="#4ce44c" font-size="6.5" font-family="Liberation Mono, monospace" font-weight="bold" transform="translate(229,474) rotate(90)">VR1</text>
<text x="0.0" y="0.0" fill="#ffffff" font-size="6.5" font-family="Liberation Mono, monospace" font-weight="bold" transform="translate(253,472) rotate(90)">VR1</text>
<rect x="220.5" y="466.5" width="7.0" height="7.0" fill="#1a1aff" stroke="#6f7fd8" stroke-width="1"/>
<circle cx="246.0" cy="480.5" r="3.0" fill="#1a1aff" stroke="#6f7fd8" stroke-width="1" shape-rendering="auto"/>
<circle cx="223.5" cy="490.5" r="3.0" fill="#1a1aff" stroke="#6f7fd8" stroke-width="1" shape-rendering="auto"/>
<circle cx="413.0" cy="350.0" r="2.9" fill="#2a2af0" stroke="#7f8fe0" stroke-width="1" shape-rendering="auto"/>
<circle cx="463.0" cy="383.0" r="2.9" fill="#2a2af0" stroke="#7f8fe0" stroke-width="1" shape-rendering="auto"/>
<circle cx="643.0" cy="331.0" r="2.9" fill="#2a2af0" stroke="#7f8fe0" stroke-width="1" shape-rendering="auto"/>
<circle cx="680.0" cy="345.5" r="2.9" fill="#2a2af0" stroke="#7f8fe0" stroke-width="1" shape-rendering="auto"/>
<circle cx="635.3" cy="461.0" r="2.9" fill="#2a2af0" stroke="#7f8fe0" stroke-width="1" shape-rendering="auto"/>
<circle cx="687.5" cy="335.5" r="2.8" fill="#a8a0c8" stroke="#b8b0d0" stroke-width="1" shape-rendering="auto"/>
<circle cx="491.2" cy="481.0" r="2.8" fill="#a8a0c8" stroke="#b8b0d0" stroke-width="1" shape-rendering="auto"/>
<circle cx="224.0" cy="553.0" r="2.8" fill="#a8a0c8" stroke="#b8b0d0" stroke-width="1" shape-rendering="auto"/>
<rect x="604.0" y="472.0" width="41.0" height="19.0" fill="none" stroke="#3f8a2a" stroke-width="1"/>
<rect x="605.0" y="474.5" width="37.5" height="13.0" fill="#000" stroke="#ffffff" stroke-width="1"/>
<rect x="609.0" y="477.0" width="8.0" height="8.0" fill="#1a1aff" stroke="#6f7fd8" stroke-width="1"/>
<circle cx="623.0" cy="481.0" r="3.3" fill="#1a1aff" stroke="#6f7fd8" stroke-width="1" shape-rendering="auto"/>
<circle cx="633.3" cy="481.0" r="3.3" fill="#1a1aff" stroke="#6f7fd8" stroke-width="1" shape-rendering="auto"/>
<text x="617.0" y="494.5" fill="#4ce44c" font-size="6.5" font-family="Liberation Mono, monospace" font-weight="bold" >Q4</text>
<text x="618.0" y="472.5" fill="#4ce44c" font-size="6" font-family="Liberation Mono, monospace" font-weight="bold" textLength="19" lengthAdjust="spacingAndGlyphs">2N5Y</text>
<text x="610.0" y="473.5" fill="#ffffff" font-size="6.5" font-family="Liberation Mono, monospace" font-weight="bold" >Q4</text>
<rect x="659.0" y="472.0" width="41.0" height="19.0" fill="none" stroke="#3f8a2a" stroke-width="1"/>
<rect x="660.0" y="474.5" width="37.5" height="13.0" fill="#000" stroke="#ffffff" stroke-width="1"/>
<rect x="664.0" y="477.0" width="8.0" height="8.0" fill="#1a1aff" stroke="#6f7fd8" stroke-width="1"/>
<circle cx="678.0" cy="481.0" r="3.3" fill="#1a1aff" stroke="#6f7fd8" stroke-width="1" shape-rendering="auto"/>
<circle cx="688.3" cy="481.0" r="3.3" fill="#1a1aff" stroke="#6f7fd8" stroke-width="1" shape-rendering="auto"/>
<text x="672.0" y="494.5" fill="#4ce44c" font-size="6.5" font-family="Liberation Mono, monospace" font-weight="bold" >Q2</text>
<text x="673.0" y="472.5" fill="#4ce44c" font-size="6" font-family="Liberation Mono, monospace" font-weight="bold" textLength="19" lengthAdjust="spacingAndGlyphs">2N5Y</text>
<text x="665.0" y="473.5" fill="#ffffff" font-size="6.5" font-family="Liberation Mono, monospace" font-weight="bold" >Q2</text>
<polyline points="697.5,474.5 697.5,487.5" fill="none" stroke="#000" stroke-width="1" />
<polyline points="697.5,474.5 697.5,487.5" fill="none" stroke="#ffffff" stroke-width="1" stroke-dasharray="3,2"/>
<polyline points="685.5,466.0 678.5,478.0" fill="none" stroke="#e040a0" stroke-width="1.2" />
<rect x="674.5" y="513.5" width="23.5" height="21.0" fill="none" stroke="#3f8a2a" stroke-width="1"/>
<path d="M678,516.5 A12.5,12.5 0 0 0 678,533.5 L694,533.5 A12.5,12.5 0 0 0 694,516.5" fill="none" stroke="#fff" stroke-width="1" shape-rendering="auto"/>
<circle cx="680.0" cy="525.0" r="2.6" fill="#1a1aff" stroke="#6f7fd8" stroke-width="1" shape-rendering="auto"/>
<circle cx="686.0" cy="525.0" r="2.6" fill="#1a1aff" stroke="#6f7fd8" stroke-width="1" shape-rendering="auto"/>
<circle cx="691.5" cy="525.0" r="2.6" fill="#1a1aff" stroke="#6f7fd8" stroke-width="1" shape-rendering="auto"/>
<text x="674.0" y="514.0" fill="#ffffff" font-size="6.5" font-family="Liberation Mono, monospace" font-weight="bold" >Q1</text>
<text x="676.5" y="540.0" fill="#4ce44c" font-size="6" font-family="Liberation Mono, monospace" font-weight="bold" textLength="22" lengthAdjust="spacingAndGlyphs">BC557A</text>
<rect x="800.0" y="290.2" width="175.5" height="118.5" fill="none" stroke="#3f8a2a" stroke-width="1"/>
<path d="M866.2,295.2 A52.7,52.7 0 0 1 908.8,295.2 L969.6,334.9 A23.7,23.7 0 0 1 969.6,363.5 L908.8,403.2 A52.7,52.7 0 0 1 866.2,403.2 L805.4,363.5 A23.7,23.7 0 0 1 805.4,334.9 Z" fill="none" stroke="#fff" stroke-width="1.05" shape-rendering="auto"/>
<circle cx="821.2" cy="349.2" r="9.0" fill="#1a1aff" stroke="#8c8c94" stroke-width="2" shape-rendering="auto"/>
<text x="811.8" y="352.2" fill="#ffffb0" font-size="7" font-family="Liberation Mono, monospace" font-weight="bold" textLength="20" lengthAdjust="spacingAndGlyphs">hole</text>
<circle cx="953.8" cy="349.2" r="9.0" fill="#1a1aff" stroke="#8c8c94" stroke-width="2" shape-rendering="auto"/>
<text x="944.2" y="352.2" fill="#ffffb0" font-size="7" font-family="Liberation Mono, monospace" font-weight="bold" textLength="20" lengthAdjust="spacingAndGlyphs">hole</text>
<rect x="874.5" y="320.0" width="10.0" height="10.0" fill="#1a1aff" stroke="#6f7fd8" stroke-width="1"/>
<circle cx="879.0" cy="373.0" r="4.2" fill="#1a1aff" stroke="#6f7fd8" stroke-width="1" shape-rendering="auto"/>
<text x="813.5" y="308.7" fill="#ffffff" font-size="6.5" font-family="Liberation Mono, monospace" font-weight="bold" >Q3</text>
<text x="884.0" y="338.7" fill="#4ce44c" font-size="6.5" font-family="Liberation Mono, monospace" font-weight="bold" textLength="31" lengthAdjust="spacingAndGlyphs">Q2N3055</text>
<text x="890.5" y="346.7" fill="#4ce44c" font-size="4.5" font-family="Liberation Mono, monospace" font-weight="bold" >TO3</text>
<text x="886.0" y="356.2" fill="#4ce44c" font-size="6.5" font-family="Liberation Mono, monospace" font-weight="bold" >Q3</text>
<rect x="789.0" y="445.4" width="175.5" height="118.5" fill="none" stroke="#3f8a2a" stroke-width="1"/>
<path d="M855.2,450.4 A52.7,52.7 0 0 1 897.8,450.4 L958.6,490.1 A23.7,23.7 0 0 1 958.6,518.7 L897.8,558.4 A52.7,52.7 0 0 1 855.2,558.4 L794.4,518.7 A23.7,23.7 0 0 1 794.4,490.1 Z" fill="none" stroke="#fff" stroke-width="1.05" shape-rendering="auto"/>
<circle cx="810.2" cy="504.4" r="9.0" fill="#1a1aff" stroke="#8c8c94" stroke-width="2" shape-rendering="auto"/>
<text x="800.8" y="507.4" fill="#ffffb0" font-size="7" font-family="Liberation Mono, monospace" font-weight="bold" textLength="20" lengthAdjust="spacingAndGlyphs">hole</text>
<circle cx="942.8" cy="504.4" r="9.0" fill="#1a1aff" stroke="#8c8c94" stroke-width="2" shape-rendering="auto"/>
<text x="933.2" y="507.4" fill="#ffffb0" font-size="7" font-family="Liberation Mono, monospace" font-weight="bold" textLength="20" lengthAdjust="spacingAndGlyphs">hole</text>
<rect x="863.5" y="475.2" width="10.0" height="10.0" fill="#1a1aff" stroke="#6f7fd8" stroke-width="1"/>
<circle cx="868.0" cy="528.2" r="4.2" fill="#1a1aff" stroke="#6f7fd8" stroke-width="1" shape-rendering="auto"/>
<text x="802.5" y="463.9" fill="#ffffff" font-size="6.5" font-family="Liberation Mono, monospace" font-weight="bold" >Q5</text>
<text x="873.0" y="493.9" fill="#4ce44c" font-size="6.5" font-family="Liberation Mono, monospace" font-weight="bold" textLength="31" lengthAdjust="spacingAndGlyphs">Q2N3055</text>
<text x="879.5" y="501.9" fill="#4ce44c" font-size="4.5" font-family="Liberation Mono, monospace" font-weight="bold" >TO3</text>
<text x="875.0" y="511.4" fill="#4ce44c" font-size="6.5" font-family="Liberation Mono, monospace" font-weight="bold" >Q5</text>
<polyline points="783.0,581.0 1131.0,581.0" fill="none" stroke="#ff0000" stroke-width="2.4" />
<polyline points="768.0,603.5 1131.0,603.5" fill="none" stroke="#ff0000" stroke-width="2.4" />
<polyline points="768.0,625.5 1131.0,625.5" fill="none" stroke="#e41616" stroke-width="1" />
<polyline points="768.0,642.5 1131.0,642.5" fill="none" stroke="#e41616" stroke-width="1" />
<polyline points="768.0,658.5 1131.0,658.5" fill="none" stroke="#e41616" stroke-width="1" />
<polyline points="768.0,675.5 1131.0,675.5" fill="none" stroke="#e41616" stroke-width="1" />
<polyline points="768.0,692.5 1131.0,692.5" fill="none" stroke="#e41616" stroke-width="1" />
<polyline points="768.0,708.5 1131.0,708.5" fill="none" stroke="#e41616" stroke-width="1" />
<polyline points="768.0,731.5 1131.0,731.5" fill="none" stroke="#e41616" stroke-width="1" />
<polyline points="768.5,603.0 768.5,731.5" fill="none" stroke="#e41616" stroke-width="1" />
<polyline points="810.0,603.0 810.0,708.5" fill="none" stroke="#e41616" stroke-width="2" />
<polyline points="903.5,603.0 903.5,708.5" fill="none" stroke="#e41616" stroke-width="1" />
<polyline points="992.5,603.0 992.5,731.5" fill="none" stroke="#e41616" stroke-width="1" />
<polyline points="1054.5,603.0 1054.5,731.5" fill="none" stroke="#e41616" stroke-width="1" />
<text x="919.0" y="597.5" fill="#e41616" font-size="20" font-family="Liberation Mono, monospace" textLength="114" lengthAdjust="spacingAndGlyphs">DRILL CHART</text>
<text x="774.5" y="619.0" fill="#e41616" font-size="17.5" font-family="Liberation Mono, monospace" textLength="30" lengthAdjust="spacingAndGlyphs">SYM</text>
<text x="838.0" y="619.0" fill="#e41616" font-size="17.5" font-family="Liberation Mono, monospace" textLength="38.5" lengthAdjust="spacingAndGlyphs">DIAM</text>
<text x="934.0" y="619.0" fill="#e41616" font-size="17.5" font-family="Liberation Mono, monospace" textLength="29" lengthAdjust="spacingAndGlyphs">TOL</text>
<text x="1008.0" y="619.0" fill="#e41616" font-size="17.5" font-family="Liberation Mono, monospace" textLength="30" lengthAdjust="spacingAndGlyphs">QTY</text>
<text x="1098.5" y="619.0" fill="#e41616" font-size="17.5" font-family="Liberation Mono, monospace" textLength="40" lengthAdjust="spacingAndGlyphs">NOTE</text>
<text x="858.0" y="637.2" fill="#e41616" font-size="12.2" font-family="Liberation Mono, monospace" textLength="35" lengthAdjust="spacingAndGlyphs">0.028</text>
<text x="1044.0" y="637.2" fill="#e41616" font-size="12.2" font-family="Liberation Mono, monospace" text-anchor="end">35</text>
<text x="789.0" y="636.2" fill="#e41616" font-size="9" font-family="DejaVu Sans, monospace" text-anchor="middle">×</text>
<text x="858.0" y="653.8" fill="#e41616" font-size="12.2" font-family="Liberation Mono, monospace" textLength="35" lengthAdjust="spacingAndGlyphs">0.031</text>
<text x="1044.0" y="653.8" fill="#e41616" font-size="12.2" font-family="Liberation Mono, monospace" text-anchor="end">3</text>
<text x="789.0" y="652.8" fill="#e41616" font-size="9" font-family="DejaVu Sans, monospace" text-anchor="middle">+</text>
<text x="858.0" y="670.0" fill="#e41616" font-size="12.2" font-family="Liberation Mono, monospace" textLength="35" lengthAdjust="spacingAndGlyphs">0.034</text>
<text x="1044.0" y="670.0" fill="#e41616" font-size="12.2" font-family="Liberation Mono, monospace" text-anchor="end">12</text>
<text x="789.0" y="669.0" fill="#e41616" font-size="9" font-family="DejaVu Sans, monospace" text-anchor="middle">◇</text>
<text x="858.0" y="687.0" fill="#e41616" font-size="12.2" font-family="Liberation Mono, monospace" textLength="35" lengthAdjust="spacingAndGlyphs">0.054</text>
<text x="1044.0" y="687.0" fill="#e41616" font-size="12.2" font-family="Liberation Mono, monospace" text-anchor="end">10</text>
<text x="789.0" y="686.0" fill="#e41616" font-size="9" font-family="DejaVu Sans, monospace" text-anchor="middle">⊠</text>
<text x="858.0" y="703.2" fill="#e41616" font-size="12.2" font-family="Liberation Mono, monospace" textLength="35" lengthAdjust="spacingAndGlyphs">0.161</text>
<text x="1044.0" y="703.2" fill="#e41616" font-size="12.2" font-family="Liberation Mono, monospace" text-anchor="end">4</text>
<text x="789.0" y="702.2" fill="#e41616" font-size="9" font-family="DejaVu Sans, monospace" text-anchor="middle">⊞</text>
<text x="857.0" y="723.8" fill="#e41616" font-size="17.5" font-family="Liberation Mono, monospace" textLength="47.5" lengthAdjust="spacingAndGlyphs">TOTAL</text>
<text x="1024.0" y="723.8" fill="#e41616" font-size="17.5" font-family="Liberation Mono, monospace" textLength="20" lengthAdjust="spacingAndGlyphs">64</text>
<rect x="146" y="206" width="864" height="477" fill="none" stroke="#ffff58" stroke-width="2"/>
<g shape-rendering="auto"><circle cx="768.5" cy="580.5" r="7.2" fill="none" stroke="#fff" stroke-width="1.3"/></g>
<polyline points="752.0,580.5 785.0,580.5" fill="none" stroke="#ffffff" stroke-width="1" />
<polyline points="768.5,565.0 768.5,580.0" fill="none" stroke="#ffffff" stroke-width="1" />
<polyline points="768.5,580.0 768.5,597.0" fill="none" stroke="#60e0e0" stroke-width="1" />
</svg>
</div>
<div id="vs" class="abs">
<div class="sb" style="left:1px;top:1px"><svg width="13" height="13"><path d="M3,8 L6.5,4.5 L10,8" stroke="#4d6185" stroke-width="2" fill="none"/></svg></div>
<div class="th" style="left:1px;top:174.5px;width:15px;height:313px"><svg width="13" height="311"><path d="M4,153.5 H10 M4,155.5 H10 M4,157.5 H10 M4,159.5 H10" stroke="#eef4fe" stroke-width="1"/><path d="M4.5,154.5 H10.5 M4.5,156.5 H10.5 M4.5,158.5 H10.5 M4.5,160.5 H10.5" stroke="#8ca0e0" stroke-width="1"/></svg></div>
<div class="sb" style="left:1px;top:649px"><svg width="13" height="13"><path d="M3,5 L6.5,8.5 L10,5" stroke="#4d6185" stroke-width="2" fill="none"/></svg></div>
</div>
<div id="hs" class="abs">
<div class="sb" style="left:1px;top:1px"><svg width="13" height="13"><path d="M8,3 L4.5,6.5 L8,10" stroke="#4d6185" stroke-width="2" fill="none"/></svg></div>
<div class="th thh" style="left:283px;top:1px;width:543px;height:15px"><svg width="540" height="13"><path d="M267.5,4 V10 M269.5,4 V10 M271.5,4 V10 M273.5,4 V10" stroke="#eef4fe" stroke-width="1"/><path d="M268.5,4.5 V10.5 M270.5,4.5 V10.5 M272.5,4.5 V10.5 M274.5,4.5 V10.5" stroke="#8ca0e0" stroke-width="1"/></svg></div>
<div class="sb" style="left:1110px;top:1px"><svg width="13" height="13"><path d="M5,3 L8.5,6.5 L5,10" stroke="#4d6185" stroke-width="2" fill="none"/></svg></div>
</div>
<div id="corner" class="abs"><svg width="17" height="16"><g fill="#b8b4a0"><rect x="11" y="11" width="2" height="2"/><rect x="7" y="11" width="2" height="2"/><rect x="11" y="7" width="2" height="2"/><rect x="3" y="11" width="2" height="2"/><rect x="7" y="7" width="2" height="2"/><rect x="11" y="3" width="2" height="2"/></g></svg></div>
<div id="status" class="abs"><span class="t">[-1625,-950]&nbsp;&nbsp; RAM: 13629K Used, 2097983K Available</span></div>
<div id="task" class="abs">
<div id="start"><svg style="position:absolute;left:10px;top:5px" width="22" height="20" viewBox="0 0 22 20"><path d="M2,3 Q6,1 10,3 L9,9 Q5,7 1,9 Z" fill="#e85020"/><path d="M11.5,3.5 Q15,5 19,3 L18,9 Q14,11 10.5,9.5 Z" fill="#70c030"/><path d="M0.8,10.5 Q5,8.5 8.8,10.5 L7.8,16.5 Q4,14.5 0,16.5 Z" fill="#3080e8"/><path d="M10.3,11 Q14,12.5 17.8,10.5 L16.8,16.5 Q13,18.5 9.3,17 Z" fill="#f0c020"/></svg><span>démarrer</span></div>
<div class="ql" style="left:147.5px"><svg width="16" height="16"><circle cx="8" cy="8" r="7" fill="#3a70d8"/><rect x="4" y="3" width="8" height="10" fill="#f4f4ff"/><path d="M5,5 H11 M5,7 H11 M5,9 H9" stroke="#3050a0"/><path d="M9,9 L14,4" stroke="#f0f0f0" stroke-width="2"/></svg></div>
<div class="ql" style="left:171.0px"><svg width="17" height="16"><circle cx="8.5" cy="8.5" r="6" fill="none" stroke="#58a8f0" stroke-width="3"/><path d="M3,9 H13" stroke="#58a8f0" stroke-width="2.4"/><path d="M1,12 Q8,-2 16,3" stroke="#f0c030" stroke-width="1.6" fill="none"/></svg></div>
<div class="ql" style="left:193.5px"><svg width="17" height="17"><circle cx="8.5" cy="8.5" r="7.5" fill="#e86810"/><circle cx="9" cy="8" r="4.6" fill="#3a58c8"/><path d="M2,6 Q4,1 10,1.5 Q6,3 6,6 Q9,6 9,9 Q6,9 5,12 Q2,10 2,6Z" fill="#f8b020"/></svg></div>
<div class="ql" style="left:216.5px"><svg width="16" height="16"><rect x="1" y="1" width="14" height="14" fill="#204080"/><rect x="1" y="9" width="14" height="6" fill="#102040"/><text x="8" y="8" font-size="6.5" font-weight="bold" font-family="Liberation Sans, sans-serif" fill="#fff" text-anchor="middle">DIV</text><text x="8" y="14.5" font-size="6" font-weight="bold" font-family="Liberation Sans, sans-serif" fill="#40a0ff" text-anchor="middle">X</text></svg></div>
<div class="ql" style="left:239.5px"><svg width="16" height="16"><rect x="0.5" y="0.5" width="15" height="15" fill="#a8a820" stroke="#606010"/><circle cx="8" cy="8" r="4.5" fill="none" stroke="#fff" stroke-width="1.8"/><path d="M8,5 V8 H10.5" stroke="#fff" stroke-width="1.4" fill="none"/></svg></div>
<div class="ql" style="left:261.5px"><svg width="18" height="16"><circle cx="7" cy="8" r="6" fill="#e8e8e8"/><circle cx="7" cy="8" r="4.5" fill="#d02020"/><circle cx="7" cy="8" r="2" fill="#fff"/><rect x="12" y="4" width="4" height="8" fill="#181818"/></svg></div>
<div class="tk" style="left:323.2px"><svg width="16" height="16"><rect x="1" y="2" width="14" height="12" fill="#e8f0f8" stroke="#204060"/><rect x="2.5" y="3.5" width="11" height="9" fill="#48a0e0"/><path d="M2.5,12.5 L6,7 L9,10 L11,8 L13.5,12.5 Z" fill="#30a030"/></svg><span>2N3...</span></div>
<div class="tk" style="left:399.1px"><svg width="16" height="16"><rect x="1" y="1" width="14" height="14" fill="#000"/><rect x="2" y="2" width="12" height="12" fill="#f2d4d0"/><circle cx="4.6" cy="5.4" r="1.9" fill="#f01010"/><circle cx="11" cy="5.2" r="1.9" fill="#f01010"/><circle cx="4.6" cy="11.4" r="1.9" fill="#f01010"/><circle cx="7.4" cy="8.4" r="1.3" fill="#f01010"/><path d="M8.5,8.5 L11,7.5 L13,10.5 L13,14 L8.5,14 Z" fill="#000"/></svg><span>Orc...</span></div>
<div class="tk a" style="left:475.0px"><svg width="16" height="16"><rect x="1" y="1" width="14" height="14" fill="#000"/><rect x="2" y="2" width="12" height="12" fill="#f2d4d0"/><circle cx="4.6" cy="5.4" r="1.9" fill="#f01010"/><circle cx="11" cy="5.2" r="1.9" fill="#f01010"/><circle cx="4.6" cy="11.4" r="1.9" fill="#f01010"/><circle cx="7.4" cy="8.4" r="1.3" fill="#f01010"/><path d="M8.5,8.5 L11,7.5 L13,10.5 L13,14 L8.5,14 Z" fill="#000"/></svg><span>Lay...</span></div>
<div class="tk" style="left:550.9px"><svg width="16" height="16"><rect x="1" y="1" width="14" height="14" rx="2" fill="#f4f0e0" stroke="#c0a060"/><path d="M3,12 L12,4 L13,6 L5,13 Z" fill="#e08020"/><path d="M3,9 H9" stroke="#888" stroke-width="1"/></svg><span>Orc...</span></div>
<div class="tk" style="left:626.8px"><svg width="17" height="17"><circle cx="8.5" cy="8.5" r="7.5" fill="#e86810"/><circle cx="9" cy="8" r="4.6" fill="#3a58c8"/><path d="M2,6 Q4,1 10,1.5 Q6,3 6,6 Q9,6 9,9 Q6,9 5,12 Q2,10 2,6Z" fill="#f8b020"/></svg><span>For...</span></div>
<div class="tk" style="left:702.7px"><svg width="17" height="17"><circle cx="8.5" cy="8.5" r="7.5" fill="#e86810"/><circle cx="9" cy="8" r="4.6" fill="#3a58c8"/><path d="M2,6 Q4,1 10,1.5 Q6,3 6,6 Q9,6 9,9 Q6,9 5,12 Q2,10 2,6Z" fill="#f8b020"/></svg><span>Télé...</span></div>
<div class="tk" style="left:778.6px"><svg width="16" height="16"><rect x="1" y="1" width="14" height="14" rx="2" fill="#f4f0e0" stroke="#c0a060"/><path d="M3,12 L12,4 L13,6 L5,13 Z" fill="#e08020"/><path d="M3,9 H9" stroke="#888" stroke-width="1"/></svg><span>pdf...</span></div>
<div class="tk" style="left:854.5px"><svg width="16" height="16"><path d="M4,7 L12,7 L11,15 L5,15 Z" fill="#e0c070" stroke="#806020" stroke-width=".7"/><path d="M5,7 L3,1 M8,7 L8,0.5 M11,7 L13,1.5" stroke="#30a040" stroke-width="1.6"/><path d="M6.5,7 L6,2" stroke="#d03030" stroke-width="1.4"/></svg><span>1 - ...</span></div>
<div id="tray">
<svg class="ql" style="left:8px" width="17" height="16"><rect x="2" y="2" width="9" height="7" fill="#7890c0" stroke="#304070"/><rect x="6" y="6" width="9" height="7" fill="#90a8d8" stroke="#304070"/><path d="M9,9 L15,15 M15,9 L9,15" stroke="#e02020" stroke-width="2"/></svg>
<svg class="ql" style="left:27px" width="17" height="16"><circle cx="7" cy="7" r="5.5" fill="#b0b0b0" stroke="#505050"/><circle cx="7" cy="7" r="2" fill="#404040"/><path d="M10,11 L15,14" stroke="#707070" stroke-width="2"/></svg>
<svg class="ql" style="left:45px" width="17" height="16"><path d="M3,3 L9,3 L8,7 L13,9 L9,14 L4,12 L6,8 Z" fill="#30a040" stroke="#104018"/><path d="M8,3 L14,1 L12,5 Z" fill="#e0e0e0"/></svg>
<svg class="ql" style="left:61px" width="19" height="16"><rect x="0" y="1" width="19" height="14" fill="#101040"/><circle cx="9.5" cy="8" r="2" fill="#f0f020"/><path d="M5.5,4 Q3,8 5.5,12 M13.5,4 Q16,8 13.5,12" stroke="#f0f020" stroke-width="1.4" fill="none"/><path d="M3,2.5 Q-0.5,8 3,13.5 M16,2.5 Q19.5,8 16,13.5" stroke="#fff" stroke-width="1" fill="none"/></svg>
<svg class="ql" style="left:81px" width="17" height="17"><text x="1" y="11" font-size="13" font-weight="bold" font-family="Liberation Sans, sans-serif" fill="#d01010">S</text><circle cx="12" cy="12" r="4" fill="#20a030"/><text x="12" y="14.5" font-size="6" font-weight="bold" font-family="Liberation Sans, sans-serif" fill="#fff" text-anchor="middle">AB</text></svg>
<svg class="ql" style="left:101px" width="16" height="16"><path d="M8,1 L14,3 Q14,11 8,15 Q2,11 2,3 Z" fill="#d82020" stroke="#fff" stroke-width="1"/><path d="M5.5,5.5 L10.5,10.5 M10.5,5.5 L5.5,10.5" stroke="#fff" stroke-width="1.8"/></svg>
<span>GMT+1=11:32</span></div>
</div>
</body>
</html>
